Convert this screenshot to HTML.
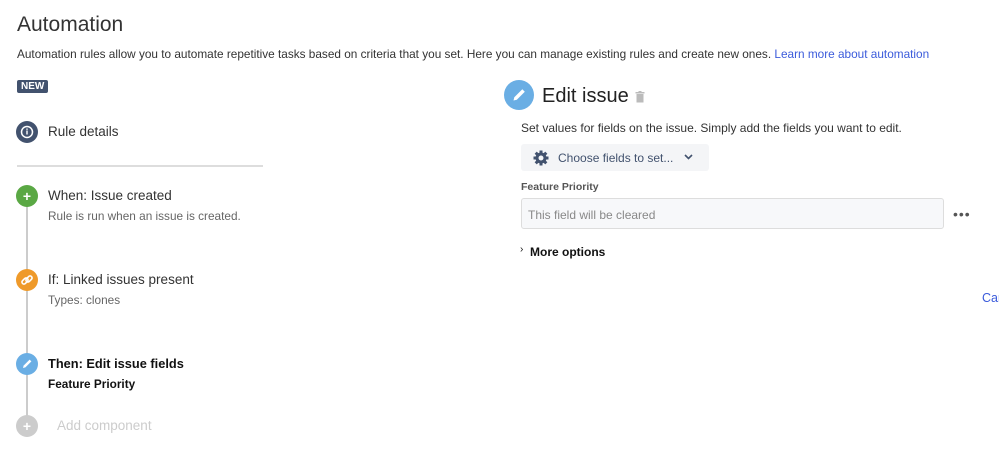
<!DOCTYPE html>
<html><head><style>
body{margin:0;width:999px;height:465px;background:#fff;font-family:"Liberation Sans",sans-serif;color:#172b4d;position:relative;overflow:hidden}
.a{position:absolute;white-space:nowrap}
.c{position:absolute;border-radius:50%;width:22px;height:22px;color:#fff;text-align:center;line-height:22px;font-size:14px;font-weight:bold}
.c svg{position:absolute;left:0;top:0}
</style></head><body>
<div class="a" style="left:17px;top:13px;font-size:21px;color:#333">Automation</div>
<div class="a" style="left:17px;top:47px;font-size:11.8px;color:#333">Automation rules allow you to automate repetitive tasks based on criteria that you set. Here you can manage existing rules and create new ones. <span style="color:#3b5bdb">Learn more about automation</span></div>
<div class="a" style="left:17px;top:80px;background:#42526e;color:#fff;font-size:10px;font-weight:bold;padding:1px 4px;border-radius:2px">NEW</div>
<div class="c" style="left:16px;top:121px;background:#42526e"><svg width="22" height="22"><circle cx="11" cy="11" r="5.5" fill="none" stroke="#fff" stroke-width="1.5"/><rect x="10.3" y="9.5" width="1.4" height="4" fill="#fff"/><rect x="10.3" y="7.5" width="1.4" height="1.3" fill="#fff"/></svg></div>
<div class="a" style="left:48px;top:124px;font-size:13.5px;color:#333">Rule details</div>
<div class="a" style="left:17px;top:165px;width:246px;height:2px;background:#ddd"></div>
<div class="a" style="left:26px;top:196px;width:2px;height:224px;background:#ccc"></div>
<div class="c" style="left:16px;top:185px;background:#5aa844">+</div>
<div class="a" style="left:48px;top:188px;font-size:13.5px;color:#333">When: Issue created</div>
<div class="a" style="left:48px;top:209px;font-size:11.8px;color:#666">Rule is run when an issue is created.</div>
<div class="c" style="left:16px;top:269px;background:#ef9a2a"><svg width="22" height="22"><g fill="none" stroke="#fff" stroke-width="1.6"><rect x="5.5" y="10" width="7" height="4" rx="2" transform="rotate(-45 9 12)"/><rect x="9.5" y="8" width="7" height="4" rx="2" transform="rotate(-45 13 10)"/></g></svg></div>
<div class="a" style="left:48px;top:272px;font-size:13.5px;color:#333">If: Linked issues present</div>
<div class="a" style="left:48px;top:293px;font-size:11.8px;color:#666">Types: clones</div>
<div class="c" style="left:16px;top:353px;background:#6aaee4"><svg width="22" height="22"><path d="M7 15 L7.6 12.6 L13.6 6.6 L15.4 8.4 L9.4 14.4 Z" fill="#fff"/></svg></div>
<div class="a" style="left:48px;top:356px;font-size:12.8px;font-weight:bold;color:#111">Then: Edit issue fields</div>
<div class="a" style="left:48px;top:377px;font-size:11.8px;font-weight:bold;color:#111">Feature Priority</div>
<div class="c" style="left:16px;top:415px;background:#ccc">+</div>
<div class="a" style="left:57px;top:418px;font-size:13.5px;color:#ccc">Add component</div>
<div class="c" style="left:504px;top:80px;width:30px;height:30px;background:#6aaee4"><svg width="30" height="30"><path d="M9.5 20.5 L10.3 17.2 L18.3 9.2 L20.8 11.7 L12.8 19.7 Z" fill="#fff"/></svg></div>
<div class="a" style="left:542px;top:85px;font-size:20px;color:#222">Edit issue</div>
<svg class="a" style="left:635px;top:91px" width="10" height="12"><rect x="0.5" y="1" width="9" height="1.5" fill="#bbb"/><rect x="3.5" y="0" width="3" height="1.5" fill="#bbb"/><rect x="1.5" y="3" width="7" height="8.5" fill="#bbb"/></svg>
<div class="a" style="left:521px;top:121px;font-size:12px;color:#333">Set values for fields on the issue. Simply add the fields you want to edit.</div>
<div class="a" style="left:521px;top:144px;width:188px;height:27px;background:#f4f5f7;border-radius:3px"></div>
<svg class="a" style="left:533px;top:150px" width="16" height="16" viewBox="0 0 16 16"><g fill="#42526e"><circle cx="8" cy="8" r="5.5"/><rect x="6.5" y="0.5" width="3" height="15"/><rect x="0.5" y="6.5" width="15" height="3"/><rect x="6.5" y="0.5" width="3" height="15" transform="rotate(45 8 8)"/><rect x="6.5" y="0.5" width="3" height="15" transform="rotate(-45 8 8)"/></g><circle cx="8" cy="8" r="2.5" fill="#f4f5f7"/></svg>
<div class="a" style="left:558px;top:151px;font-size:12px;color:#42526e">Choose fields to set...</div>
<svg class="a" style="left:684px;top:154px" width="9" height="6"><path d="M1 1 L4.5 4.5 L8 1" fill="none" stroke="#42526e" stroke-width="1.6"/></svg>
<div class="a" style="left:521px;top:181px;font-size:10.5px;font-weight:bold;color:#555">Feature Priority</div>
<div class="a" style="left:521px;top:198px;width:421px;height:29px;border:1.5px solid #ddd;background:#f7f8fa;border-radius:3px"></div>
<div class="a" style="left:528px;top:208px;font-size:12px;color:#888">This field will be cleared</div>
<div class="a" style="left:953px;top:206px;font-size:14px;color:#555;letter-spacing:1px">•••</div>
<div class="a" style="left:520px;top:244px;font-size:10px;color:#111">›</div>
<div class="a" style="left:530px;top:245px;font-size:12px;font-weight:bold;color:#111">More options</div>
<div class="a" style="left:982px;top:291px;font-size:12.5px;color:#3b5bdb">Car</div>
</body></html>
